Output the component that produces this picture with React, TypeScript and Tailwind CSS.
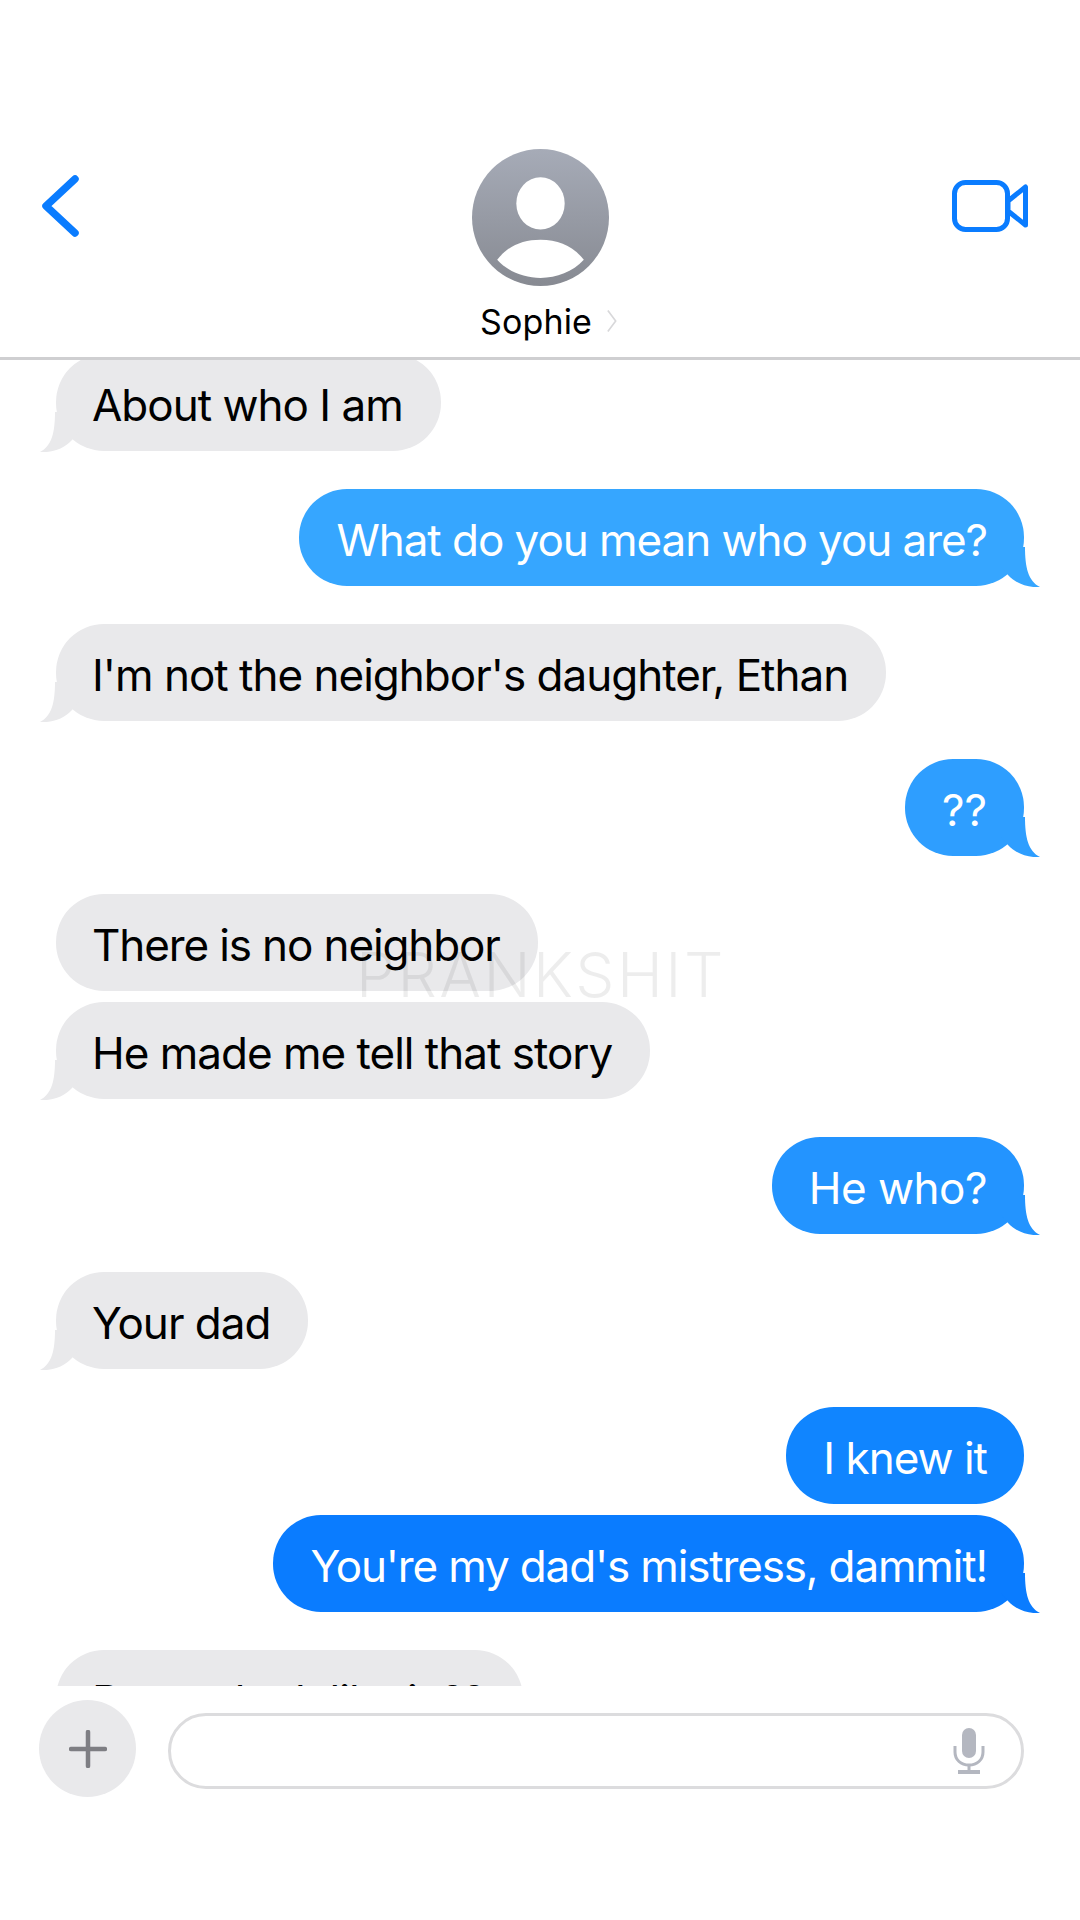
import { ReactNode } from "react";

const sf = "font-['Inter',sans-serif]";

function Tail({ side, fill }: { side: "left" | "right"; fill: string }) {
  return (
    <svg
      viewBox="0 0 40 40"
      className={`absolute bottom-[-1px] h-[40px] w-[40px] ${fill} ${
        side === "right" ? "right-[-17px]" : "left-[-17px] -scale-x-100"
      }`}
    >
      <path d="M0 0 L24 0 C24 20 27 34 39 40 C28 41 15 37 7 28 L0 20 Z" />
    </svg>
  );
}

function Incoming({
  children,
  tail = true,
  mt = "mt-[38px]",
  track = "",
}: {
  children: ReactNode;
  tail?: boolean;
  mt?: string;
  track?: string;
}) {
  return (
    <div className={`${mt} flex justify-start`}>
      <div className="relative h-[97px] rounded-[48px] bg-[#e9e9eb] pl-[36px] pr-[38px] text-black">
        <span className={`relative z-10 block leading-[103px] ${track}`}>{children}</span>
        {tail && <Tail side="left" fill="fill-[#e9e9eb]" />}
      </div>
    </div>
  );
}

function Outgoing({
  children,
  bg,
  fill,
  tail = true,
  mt = "mt-[38px]",
  track = "",
}: {
  children: ReactNode;
  bg: string;
  fill: string;
  tail?: boolean;
  mt?: string;
  track?: string;
}) {
  return (
    <div className={`${mt} flex justify-end`}>
      <div className={`relative h-[97px] rounded-[48px] pl-[37px] pr-[37px] text-white ${bg}`}>
        <span className={`relative z-10 block leading-[103px] ${track}`}>{children}</span>
        {tail && <Tail side="right" fill={fill} />}
      </div>
    </div>
  );
}

export default function App() {
  return (
    <div className={`relative flex h-[1920px] w-[1080px] flex-col overflow-hidden bg-white ${sf}`}>
      <header className="grid h-[360px] shrink-0 grid-cols-[1fr_137px_1fr] items-start border-b-[3px] border-[#cfcfd1] px-[40px] pt-[149px]">
        <svg viewBox="0 0 40 62" className="mt-[26px] h-[62px] w-[40px] fill-none stroke-[#0a7cff]">
          <path d="M35 4 L6 31 L35 58" strokeWidth="7.5" strokeLinecap="round" strokeLinejoin="round" />
        </svg>
        <div className="flex flex-col items-center">
          <svg viewBox="0 0 136 136" className="h-[137px] w-[137px] shrink-0">
            <defs>
              <linearGradient id="avatarGrad" x1="0" y1="0" x2="0" y2="1">
                <stop offset="0" stopColor="#a6abb7" />
                <stop offset="1" stopColor="#878a92" />
              </linearGradient>
            </defs>
            <circle cx="68" cy="68" r="68" fill="url(#avatarGrad)" />
            <ellipse cx="68" cy="54" rx="24" ry="26" fill="#fff" />
            <path d="M25 110 C36 96 50 90 68 90 C86 90 100 96 111 110 C100 122 84 128 68 128 C52 128 36 122 25 110 Z" fill="#fff" />
          </svg>
          <div className="relative ml-[-8px] mt-[16px] whitespace-nowrap text-[34px] leading-[40px] tracking-[0.1px] text-black">
            Sophie
            <svg viewBox="0 0 12 26" className="absolute right-[-26px] top-[7px] h-[24px] w-[12px] fill-none stroke-[#d8d8da]">
              <path d="M1.5 1.5 L10 13 L1.5 24.5" strokeWidth="1.8" />
            </svg>
          </div>
        </div>
        <svg viewBox="0 0 76 52" className="mr-[12px] mt-[31px] h-[52px] w-[76px] justify-self-end fill-none stroke-[#0a7cff]" strokeWidth="5" strokeLinejoin="round">
          <rect x="2.5" y="2.5" width="53" height="47" rx="11" />
          <path d="M56 21 L73.5 7 V45 L56 31 Z" />
        </svg>
      </header>

      <main className="h-[1326px] shrink-0 overflow-hidden pl-[56px] pr-[56px] text-[44px] tracking-[-1px]">
        <Incoming mt="mt-[-6px]">About who I am</Incoming>
        <Outgoing bg="bg-[#36a6ff]" fill="fill-[#36a6ff]" track="tracking-[-1.05px]">What do you mean who you are?</Outgoing>
        <Incoming>I'm not the neighbor's daughter, Ethan</Incoming>
        <Outgoing bg="bg-[#2e9eff]" fill="fill-[#2e9eff]" track="tracking-[0px]">??</Outgoing>
        <Incoming tail={false} track="tracking-[-1.12px]">There is no neighbor</Incoming>
        <Incoming mt="mt-[11px]">He made me tell that story</Incoming>
        <Outgoing bg="bg-[#2394ff]" fill="fill-[#2394ff]" track="tracking-[-0.5px]">He who?</Outgoing>
        <Incoming>Your dad</Incoming>
        <Outgoing bg="bg-[#1085ff]" fill="fill-[#1085ff]" tail={false}>I knew it</Outgoing>
        <Outgoing bg="bg-[#0a7cff]" fill="fill-[#0a7cff]" mt="mt-[11px]" track="tracking-[-1.15px]">You're my dad's mistress, dammit!</Outgoing>
        <Incoming>Do not look like it ??</Incoming>
      </main>

      <footer className="flex items-start gap-[32px] pl-[39px] pr-[56px] pt-[14px]">
        <div className="flex h-[97px] w-[97px] shrink-0 items-center justify-center rounded-full bg-[#e9e9eb]">
          <svg viewBox="0 0 38 38" className="h-[38px] w-[38px] stroke-[#7e7e83]" strokeLinecap="round">
            <path d="M19 2 V36" strokeWidth="4.5" />
            <path d="M2 19 H36" strokeWidth="4.5" />
          </svg>
        </div>
        <div className="mt-[13px] flex h-[76px] flex-1 items-center justify-end rounded-full border-[3px] border-[#dcdcde] pr-[36px]">
          <svg viewBox="0 0 32 46" className="h-[46px] w-[32px] fill-none stroke-[#b4b7c0]">
            <rect x="9" y="0" width="14" height="30" rx="7" fill="#b4b7c0" stroke="none" />
            <path d="M2 18 V24 C2 32 8 37 16 37 C24 37 30 32 30 24 V18" strokeWidth="3" />
            <path d="M16 37 V43" strokeWidth="3" />
            <path d="M5 44 H27" strokeWidth="4" />
          </svg>
        </div>
      </footer>

      <div className="pointer-events-none absolute left-[356px] top-[939px] z-20 text-[62px] font-light leading-[72px] tracking-[2.5px] text-black/[0.07]">
        PRANKSHIT
      </div>
    </div>
  );
}
